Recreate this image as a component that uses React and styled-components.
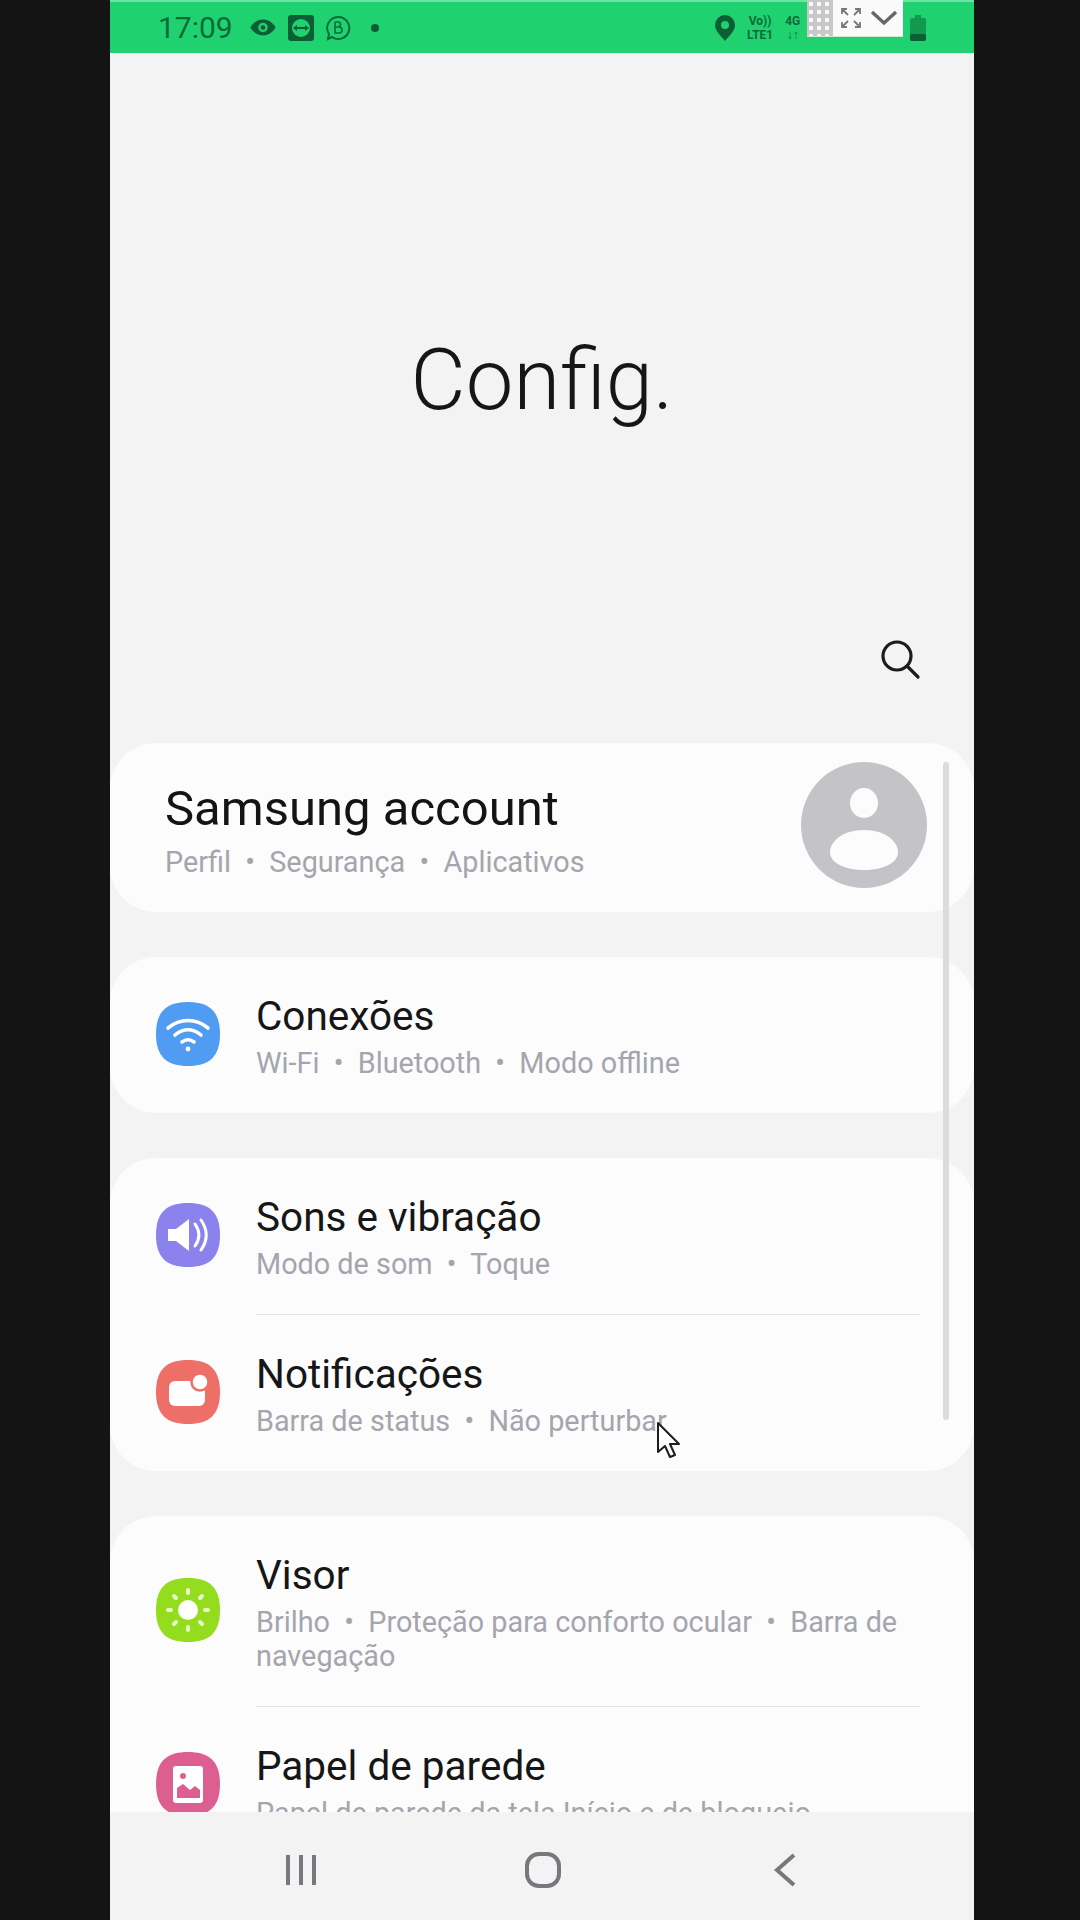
import React from "react";
import styled, { createGlobalStyle } from "styled-components";

const GlobalStyle = createGlobalStyle`
  html, body {
    margin: 0;
    padding: 0;
    background: #141414;
  }
  * {
    box-sizing: border-box;
  }
`;

const Screen = styled.div`
  width: 1080px;
  height: 1920px;
  background: #141414;
  padding: 0 106px 0 110px;
  font-family: Roboto, "Liberation Sans", sans-serif;
`;

const Phone = styled.div`
  position: relative;
  height: 100%;
  display: flex;
  flex-direction: column;
  overflow: hidden;
  background: #f3f3f3;
`;

const StatusBar = styled.div`
  flex: none;
  height: 53px;
  display: flex;
  align-items: center;
  justify-content: space-between;
  padding: 0 48px 0 48px;
  background: #1fd26f;
  border-top: 2px solid #6fe3a3;
  color: #0c6a3a;
`;

const StatusGroup = styled.div`
  display: flex;
  align-items: center;
  gap: ${(p) => p.$gap || 12}px;
  flex: none;
  width: ${(p) => (p.$width ? `${p.$width}px` : "auto")};
`;

const Time = styled.span`
  font-size: 30px;
  font-weight: 400;
  margin-right: 5px;
`;

const NetText = styled.span`
  font-size: 12px;
  line-height: 14px;
  font-weight: 700;
  text-align: center;
  white-space: pre-line;
`;

const Battery = styled.svg`
  margin-left: auto;
`;

const CaptureBar = styled.div`
  position: absolute;
  top: 0;
  left: 697px;
  width: 96px;
  height: 37px;
  display: flex;
  align-items: center;
  background: #fafafa;
  border-bottom: 1px solid #d5e5da;
`;

const CaptureGrip = styled.div`
  width: 26px;
  height: 100%;
  background-color: #c9c9c9;
  background-image: radial-gradient(circle, #fbfbfb 2px, transparent 2.5px);
  background-size: 8px 8px;
`;

const CaptureTools = styled.div`
  flex: 1;
  display: flex;
  align-items: center;
  justify-content: space-between;
  padding: 0 5px 0 8px;
`;

const Content = styled.div`
  flex: 1;
  min-height: 0;
  overflow: hidden;
`;

const TitleBlock = styled.div`
  padding-top: 277px;
  height: 584px;
`;

const BigTitle = styled.h1`
  margin: 0;
  text-align: center;
  font-size: 85px;
  line-height: 100px;
  font-weight: 300;
  color: #161616;
`;

const ActionRow = styled.div`
  height: 106px;
  display: flex;
  justify-content: flex-end;
  padding-right: 52px;
`;

const Cards = styled.div`
  display: flex;
  flex-direction: column;
  gap: 45px;
`;

const Card = styled.section`
  background: #fcfcfc;
  border-radius: 46px;
`;

const AccountRow = styled.div`
  height: 169px;
  display: flex;
  align-items: center;
  justify-content: space-between;
  padding: 0 47px 0 55px;
`;

const AccountTitle = styled.div`
  font-size: 49px;
  line-height: 64px;
  color: #141414;
  margin-bottom: 4px;
`;

const Avatar = styled.svg`
  flex: none;
  align-self: flex-start;
  margin-top: 19px;
`;

const Row = styled.div`
  display: flex;
  align-items: center;
  gap: 36px;
  padding: 31px 54px 33px 46px;
`;

const IconWrap = styled.svg`
  flex: none;
`;

const RowText = styled.div`
  flex: 1;
  min-width: 0;
`;

const RowTitle = styled.div`
  font-size: 40.5px;
  line-height: 56px;
  color: #161616;
  margin-bottom: 2px;
`;

const RowSub = styled.div`
  font-size: 28.8px;
  line-height: 34px;
  color: #a5a5ad;
`;

const Divider = styled.div`
  height: 1px;
  margin: 0 54px 0 146px;
  background: #e3e3ec;
`;

const ScrollThumb = styled.div`
  position: absolute;
  top: 762px;
  right: 25px;
  width: 6px;
  height: 658px;
  border-radius: 3px;
  background: #dcdce0;
`;

const Cursor = styled.svg`
  position: absolute;
  left: 546px;
  top: 1421px;
`;

const NavBar = styled.div`
  flex: none;
  height: 108px;
  display: flex;
  align-items: center;
  justify-content: space-between;
  padding: 8px 169px 0 171px;
  background: #f3f3f3;
`;

const NavIcon = styled.svg`
  display: block;
`;

const SQUIRCLE = "M32 0C53 0 64 9 64 32S53 64 32 64 0 55 0 32 11 0 32 0Z";

const WifiGlyph = () => (
  <g fill="none" stroke="#fff" strokeLinecap="round" strokeWidth="3.6">
    <path d="M12 26c12-10 28-10 40 0" />
    <path d="M19 33c8-7 18-7 26 0" />
    <path d="M26 40c4-3 8-3 12 0" />
    <circle cx="32" cy="47" r="2.4" fill="#fff" stroke="none" />
  </g>
);

const SoundGlyph = () => (
  <g>
    <path d="M12 26h8l13-10v32L20 38h-8z" fill="#fff" />
    <path d="M39 21c5 7 5 15 0 22" fill="none" stroke="#fff" strokeWidth="3" strokeLinecap="round" />
    <path d="M45 17c7 10 7 20 0 30" fill="none" stroke="#fff" strokeWidth="3" strokeLinecap="round" />
  </g>
);

const NotifGlyph = () => (
  <g>
    <rect x="13" y="21" width="36" height="25" rx="6" fill="#fff" />
    <circle cx="44" cy="22" r="8.5" fill="#fff" stroke="#ee6f68" strokeWidth="2.5" />
  </g>
);

const SunGlyph = () => (
  <g>
    <circle cx="32" cy="32" r="10" fill="#fff" />
    <g stroke="#e8f8c8" strokeWidth="4" strokeLinecap="round">
      <path d="M32 12v3M32 49v3M12 32h3M49 32h3M18 18l2 2M44 44l2 2M46 18l-2 2M20 44l-2 2" />
    </g>
  </g>
);

const WallpaperGlyph = () => (
  <g>
    <rect x="17" y="14" width="30" height="37" rx="3" fill="#fff" />
    <circle cx="27" cy="24" r="3" fill="#dd5f91" />
    <path d="M21 46V36l6-4 7 6 5-4 5 4v8z" fill="#dd5f91" />
  </g>
);

const AppIcon = ({ color, children }) => (
  <IconWrap width="64" height="64" viewBox="0 0 64 64">
    <path d={SQUIRCLE} fill={color} />
    {children}
  </IconWrap>
);

const SettingsRow = ({ color, glyph, title, sub }) => (
  <Row>
    <AppIcon color={color}>{glyph}</AppIcon>
    <RowText>
      <RowTitle>{title}</RowTitle>
      <RowSub>{sub}</RowSub>
    </RowText>
  </Row>
);

const App = () => (
  <>
    <GlobalStyle />
    <Screen>
      <Phone>
        <StatusBar>
          <StatusGroup $gap={11}>
            <Time>17:09</Time>
            <svg width="28" height="19" viewBox="0 0 26 18">
              <path d="M1 9c6-10 18-10 24 0-6 10-18 10-24 0z" fill="#0c5f35" />
              <circle cx="13" cy="9" r="4.5" fill="#1fd26f" />
              <circle cx="13" cy="9" r="2.2" fill="#0c5f35" />
            </svg>
            <svg width="26" height="26" viewBox="0 0 26 26">
              <rect width="26" height="26" rx="3" fill="#0c5f35" />
              <circle cx="13" cy="13" r="9" fill="#1fd26f" />
              <path d="M5 13l4-3v2h8v-2l4 3-4 3v-2H9v2z" fill="#0c5f35" />
            </svg>
            <svg width="26" height="26" viewBox="0 0 26 26" fill="none" stroke="#0c6a3a" strokeWidth="2">
              <path d="M13 2a11 11 0 1 1-6 20l-4 2 1-5A11 11 0 0 1 13 2z" />
              <path d="M10 7v11h4a3 3 0 0 0 0-6h-4m0 0h3a2.5 2.5 0 0 0 0-5h-3" strokeWidth="1.6" />
            </svg>
            <svg width="10" height="10" viewBox="0 0 10 10" style={{ marginLeft: 8 }}>
              <circle cx="5" cy="5" r="4" fill="#0c5f35" />
            </svg>
          </StatusGroup>
          <StatusGroup $width={211} $gap={12}>
            <svg width="20" height="26" viewBox="0 0 20 26">
              <path d="M10 0a10 10 0 0 1 10 10c0 6-6 11-10 16C6 21 0 16 0 10A10 10 0 0 1 10 0z" fill="#0c5f35" />
              <circle cx="10" cy="10" r="4" fill="#1fd26f" />
            </svg>
            <NetText>{"Vo))\nLTE1"}</NetText>
            <NetText>{"4G\n↓↑"}</NetText>
            <Battery width="16" height="26" viewBox="0 0 16 26">
              <rect x="5" y="0" width="6" height="3" fill="#129850" />
              <rect x="0" y="3" width="16" height="23" rx="2" fill="#129850" />
              <rect x="0" y="19" width="16" height="7" rx="2" fill="#0c5f35" />
            </Battery>
          </StatusGroup>
        </StatusBar>

        <CaptureBar>
          <CaptureGrip />
          <CaptureTools>
            <svg width="20" height="20" viewBox="0 0 20 20" fill="none" stroke="#77777c" strokeWidth="1.8">
              <path d="M1 6V1h5M14 1h5v5M19 14v5h-5M6 19H1v-5M2 2l5 5M18 2l-5 5M18 18l-5-5M2 18l5-5" />
            </svg>
            <svg width="28" height="16" viewBox="0 0 28 16" fill="none" stroke="#66666b" strokeWidth="3.4">
              <path d="M2 2l12 11L26 2" />
            </svg>
          </CaptureTools>
        </CaptureBar>

        <Content>
          <TitleBlock>
            <BigTitle>Config.</BigTitle>
          </TitleBlock>
          <ActionRow>
            <svg width="44" height="44" viewBox="0 0 44 44" fill="none" stroke="#1c1c1c" strokeWidth="3.2">
              <circle cx="19" cy="19" r="14" />
              <path d="M29 29l11 11" strokeLinecap="round" />
            </svg>
          </ActionRow>
          <Cards>
            <Card>
              <AccountRow>
                <div>
                  <AccountTitle>Samsung account</AccountTitle>
                  <RowSub>Perfil &nbsp;•&nbsp; Segurança &nbsp;•&nbsp; Aplicativos</RowSub>
                </div>
                <Avatar width="126" height="126" viewBox="0 0 126 126">
                  <circle cx="63" cy="63" r="63" fill="#c4c4c8" />
                  <ellipse cx="63" cy="41" rx="14" ry="15" fill="#fcfcfc" />
                  <path d="M63 68C85 68 97 80 97 90 97 102 80 108 63 108 46 108 29 102 29 90 29 80 41 68 63 68Z" fill="#fcfcfc" />
                </Avatar>
              </AccountRow>
            </Card>
            <Card>
              <SettingsRow
                color="#4f9cf2"
                glyph={<WifiGlyph />}
                title="Conexões"
                sub={<>Wi-Fi &nbsp;•&nbsp; Bluetooth &nbsp;•&nbsp; Modo offline</>}
              />
            </Card>
            <Card>
              <SettingsRow
                color="#8b82ee"
                glyph={<SoundGlyph />}
                title="Sons e vibração"
                sub={<>Modo de som &nbsp;•&nbsp; Toque</>}
              />
              <Divider />
              <SettingsRow
                color="#ee6f68"
                glyph={<NotifGlyph />}
                title="Notificações"
                sub={<>Barra de status &nbsp;•&nbsp; Não perturbar</>}
              />
            </Card>
            <Card>
              <SettingsRow
                color="#94dc1e"
                glyph={<SunGlyph />}
                title="Visor"
                sub={<>Brilho &nbsp;•&nbsp; Proteção para conforto ocular &nbsp;•&nbsp; Barra de navegação</>}
              />
              <Divider />
              <SettingsRow
                color="#dd5f91"
                glyph={<WallpaperGlyph />}
                title="Papel de parede"
                sub="Papel de parede da tela Início e de bloqueio"
              />
            </Card>
          </Cards>
        </Content>

        <NavBar>
          <NavIcon width="40" height="34" viewBox="0 0 40 34" fill="#77777e">
            <rect x="5" y="2" width="4" height="30" />
            <rect x="18" y="2" width="4" height="30" />
            <rect x="31" y="2" width="4" height="30" />
          </NavIcon>
          <NavIcon width="40" height="38" viewBox="0 0 40 38" fill="none" stroke="#77777e" strokeWidth="4">
            <rect x="4" y="3" width="32" height="32" rx="12" />
          </NavIcon>
          <NavIcon width="40" height="34" viewBox="0 0 40 34" fill="none" stroke="#77777e" strokeWidth="4">
            <path d="M29 2L12 17l17 15" />
          </NavIcon>
        </NavBar>

        <ScrollThumb />
        <Cursor width="26" height="38" viewBox="0 0 26 38">
          <path d="M2 2v29l7-6 5 11 5-2-5-11h9z" fill="#fff" stroke="#1c1c1c" strokeWidth="2" strokeLinejoin="round" />
        </Cursor>
      </Phone>
    </Screen>
  </>
);

export default App;
